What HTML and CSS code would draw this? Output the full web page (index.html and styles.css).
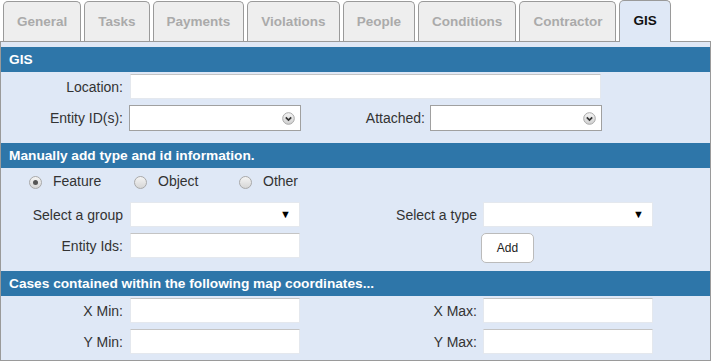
FILE: index.html
```html
<!DOCTYPE html>
<html lang="en">
<head>
    <meta charset="UTF-8">
    <meta name="viewport" content="width=device-width, initial-scale=1.0">
    <title>Case - GIS</title>
    <link rel="stylesheet" href="styles.css">
</head>
<body>
    <div class="tabs">
        <div class="tab">General</div>
        <div class="tab">Tasks</div>
        <div class="tab">Payments</div>
        <div class="tab">Violations</div>
        <div class="tab">People</div>
        <div class="tab">Conditions</div>
        <div class="tab">Contractor</div>
        <div class="tab active">GIS</div>
    </div>

    <div class="panel">
        <div class="section-title">GIS</div>
        <div class="row after-title">
            <label class="lbl">Location:</label>
            <input type="text" class="text wide">
        </div>
        <div class="row">
            <label class="lbl">Entity ID(s):</label>
            <div class="combo">
                <svg width="13" height="13" viewBox="0 0 13 13">
                    <defs>
                        <linearGradient id="cg" x1="0" y1="0" x2="0" y2="1">
                            <stop offset="0" stop-color="#f6f6f6"/>
                            <stop offset="1" stop-color="#cfcfcf"/>
                        </linearGradient>
                    </defs>
                    <circle cx="6.5" cy="6.5" r="5.8" fill="url(#cg)" stroke="#a8a8a8"/>
                    <path d="M3.8 5.3 L6.5 8 L9.2 5.3" fill="none" stroke="#333" stroke-width="1.7"/>
                </svg>
            </div>
            <label class="lbl lbl-attached">Attached:</label>
            <div class="combo">
                <svg width="13" height="13" viewBox="0 0 13 13">
                    <circle cx="6.5" cy="6.5" r="5.8" fill="url(#cg)" stroke="#a8a8a8"/>
                    <path d="M3.8 5.3 L6.5 8 L9.2 5.3" fill="none" stroke="#333" stroke-width="1.7"/>
                </svg>
            </div>
        </div>

        <div class="section-title gap-top">Manually add type and id information.</div>
        <div class="radios">
            <label class="radio-item"><input type="radio" name="kind" checked> Feature</label>
            <label class="radio-item"><input type="radio" name="kind"> Object</label>
            <label class="radio-item"><input type="radio" name="kind"> Other</label>
        </div>
        <div class="row select-row">
            <label class="lbl">Select a group</label>
            <div class="dropdown"><span class="arrow">&#9660;</span></div>
            <label class="lbl lbl-right">Select a type</label>
            <div class="dropdown"><span class="arrow">&#9660;</span></div>
        </div>
        <div class="row">
            <label class="lbl">Entity Ids:</label>
            <input type="text" class="text">
            <span class="lbl lbl-right"></span>
            <button class="btn">Add</button>
        </div>

        <div class="section-title gap-btn">Cases contained within the following map coordinates...</div>
        <div class="row after-title">
            <label class="lbl">X Min:</label>
            <input type="text" class="text">
            <label class="lbl lbl-right">X Max:</label>
            <input type="text" class="text">
        </div>
        <div class="row">
            <label class="lbl">Y Min:</label>
            <input type="text" class="text">
            <label class="lbl lbl-right">Y Max:</label>
            <input type="text" class="text">
        </div>
    </div>
</body>
</html>
```

FILE: styles.css
```css
body {
    margin: 0;
    font-family: "Liberation Sans", Arial, sans-serif;
    font-size: 14px;
    color: #333;
    background: #fff;
}
.tabs {
    display: flex;
    gap: 3px;
    padding-left: 3px;
    height: 41px;
    align-items: flex-end;
}
.tab {
    height: 40px;
    line-height: 39px;
    padding: 0 13px;
    box-sizing: border-box;
    border: 1px solid #9a9a9a;
    border-bottom: none;
    border-radius: 5px 5px 0 0;
    background: #eeeeee;
    color: #aaaaaa;
    font-weight: bold;
    font-size: 13.5px;
}
.tab.active {
    background: #dfe8f6;
    color: #111;
    height: 42px;
    margin-bottom: -1px;
    position: relative;
    z-index: 1;
}
.panel {
    width: 711px;
    box-sizing: border-box;
    border: 1px solid #9a9a9a;
    background: #dfe8f6;
    padding: 5px 0 6px;
}
.section-title {
    background: #2e76a9;
    color: #fff;
    font-weight: bold;
    font-size: 13.7px;
    height: 25px;
    line-height: 25px;
    padding-left: 8px;
}
.gap-top { margin-top: 12px; }
.gap-btn { margin-top: 13px; }
.row {
    display: flex;
    align-items: center;
    margin-top: 6px;
}
.row.after-title { margin-top: 2px; }
.row.select-row { margin-top: 9px; }
.lbl {
    width: 122px;
    text-align: right;
    margin-right: 7px;
    flex: none;
}
.lbl-attached {
    width: 124px;
    margin-right: 6px;
}
.lbl-right {
    width: 177px;
    margin-right: 6px;
}
.text {
    width: 170px;
    height: 25px;
    box-sizing: border-box;
    border: 1px solid #e4e8ee;
    border-top-color: #c4c4c4;
    background: #fff;
    margin: 0;
    padding: 0 4px;
    font: inherit;
}
.text.wide { width: 471px; }
.combo {
    width: 172px;
    height: 26px;
    box-sizing: border-box;
    margin-left: -1px;
    border: 1px solid #a0a0a0;
    background: #fff;
    display: flex;
    align-items: center;
    justify-content: flex-end;
    padding-right: 5px;
}
.dropdown {
    width: 170px;
    height: 25px;
    box-sizing: border-box;
    background: #fff;
    border: 1px solid #e4e8ee;
    display: flex;
    align-items: center;
    justify-content: flex-end;
    padding-right: 8px;
}
.arrow {
    font-size: 11px;
    color: #000;
    line-height: 1;
}
.radios {
    display: flex;
    padding-left: 28px;
    margin-top: 1px;
    height: 24px;
    align-items: center;
}
.radio-item {
    width: 105px;
    display: flex;
    align-items: center;
    gap: 11px;
}
.radio-item input {
    appearance: none;
    width: 13px;
    height: 13px;
    margin: 3px 0 0;
    border: 1px solid #a9a9a9;
    border-radius: 50%;
    background: linear-gradient(#f4f4f4, #d6d6d6);
    display: flex;
    align-items: center;
    justify-content: center;
}
.radio-item input:checked::after {
    content: "";
    width: 5px;
    height: 5px;
    border-radius: 50%;
    background: #555;
}
.btn {
    width: 53px;
    height: 30px;
    margin: 0 0 -5px -2px;
    align-self: flex-start;
    background: #fff;
    border: 1px solid #bbb;
    border-radius: 5px;
    font-family: inherit;
    font-size: 12px;
    color: #222;
    cursor: pointer;
}
```
